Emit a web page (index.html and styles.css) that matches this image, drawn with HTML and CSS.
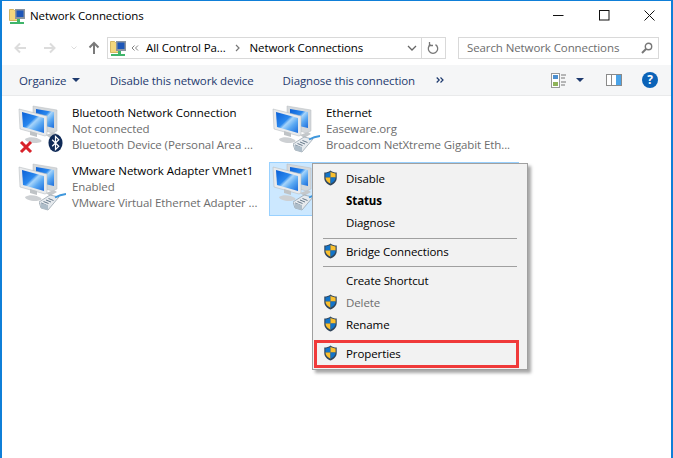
FILE: index.html
```html
<!DOCTYPE html>
<html lang="en">
<head>
<meta charset="utf-8">
<title>Network Connections</title>
<link rel="stylesheet" href="styles.css">
</head>
<body>
<svg class="defs" width="0" height="0" aria-hidden="true">
  <defs>
    <linearGradient id="scr" x1="0" y1="0" x2="1" y2="1">
      <stop offset="0" stop-color="#0a5fd6"/><stop offset=".42" stop-color="#2a88ee"/><stop offset=".52" stop-color="#a6d4fa"/><stop offset=".7" stop-color="#5aa8f2"/><stop offset="1" stop-color="#1a6cdc"/>
    </linearGradient>
    <symbol id="net" viewBox="0 0 48 48">
      <path d="M15 1l24 4v21l-5 2-19-6z" fill="#d4d8db" stroke="#b6bbbf" stroke-width=".5"/>
      <path d="M18 4l18 3v16l-18-4z" fill="url(#scr)"/>
      <path d="M1 4l28 7v19l-2 1L2 24z" fill="#e8eaec" stroke="#aeb4b8" stroke-width=".5"/>
      <path d="M4 7l22 6v15L5 22z" fill="url(#scr)"/>
      <path d="M12 26l7 2v4l-7-2z" fill="#bfc3c6"/>
      <path d="M7 34c4-3 12-2 16 1 2 2-2 3-6 3-5 0-10-2-10-4z" fill="#cdd0d3"/>
      <path d="M28 30l8-3 3 2-7 4z" fill="#c4c8cb"/>
    </symbol>
    <symbol id="plug" viewBox="0 0 27 18">
      <path d="M0 9L11 2l9 2L9 17l-7-2z" fill="#e6eaee" stroke="#8f9ca6" stroke-width=".7"/>
      <path d="M2 10l5 2M4.500 8.500l5 2M7 7l5 2M9.500 5.500l5 2" fill="none" stroke="#66798a" stroke-width="1"/>
      <path d="M2 15l7 2V12L1.500 10z" fill="#aebdc9"/>
      <path d="M16 4.500c3-1.700 6-3 11-3.500" fill="none" stroke="#3f97dc" stroke-width="2"/>
    </symbol>
    <symbol id="shield" viewBox="0 0 16 18">
      <path d="M8 .5c2 1.600 4.300 2.200 7 2.300v6.200c0 4-3 7-7 8.500-4-1.500-7-4.500-7-8.500V2.800C3.700 2.700 6 2.100 8 .5z" fill="#31465c"/>
      <path d="M8 2v6.500H2.300V3.800C4.400 3.600 6.300 3.100 8 2z" fill="#1274c9"/>
      <path d="M8 8.500h5.700V3.800C11.600 3.600 9.700 3.100 8 2z" fill="#fbc02d"/>
      <path d="M8 8.500H2.300c.1 3.200 2.500 5.500 5.700 6.900z" fill="#fbc02d"/>
      <path d="M8 8.500h5.700c-.1 3.200-2.500 5.500-5.700 6.900z" fill="#1274c9"/>
    </symbol>
    <symbol id="folder-net" viewBox="0 0 16 16">
      <path d="M.5 1.500h4l1 1h4v10h-9z" fill="#f3d67c" stroke="#c9a84b" stroke-width=".8"/>
      <rect x="6" y="1" width="10" height="10" fill="#8a94a0"/>
      <rect x="7.500" y="2.500" width="7" height="6.500" fill="#1d56b8"/>
      <rect x="8" y="11" width="3" height="3" fill="#3fb56a"/>
      <rect x="1" y="14" width="14" height="2" fill="#3fb56a"/>
    </symbol>
  </defs>
</svg>

<div class="window">
  <header class="titlebar">
    <svg class="ico16"><use href="#folder-net"/></svg>
    <span class="title-text">Network Connections</span>
    <div class="caption">
      <svg class="cap" viewBox="0 0 11 11"><path d="M0 5.500h10.500" stroke="#111" fill="none"/></svg>
      <svg class="cap" viewBox="0 0 11 11"><rect x=".5" y=".5" width="9.500" height="9.500" stroke="#111" fill="none"/></svg>
      <svg class="cap" viewBox="0 0 11 11"><path d="M.5.500l10 10M10.500.500l-10 10" stroke="#111" fill="none"/></svg>
    </div>
  </header>

  <nav class="navbar">
    <div class="navbtns">
      <svg class="arrow" viewBox="0 0 12 12"><path d="M12 6H1.500M6 1.500L1.500 6 6 10.500" fill="none" stroke="#dcdcdc" stroke-width="2"/></svg>
      <svg class="arrow fwd" viewBox="0 0 12 12"><path d="M0 6h10.500M6 1.500L10.500 6 6 10.500" fill="none" stroke="#dcdcdc" stroke-width="2"/></svg>
      <svg class="mini" viewBox="0 0 6 4"><path d="M.5.500L3 3 5.500.500" fill="none" stroke="#dcdcdc"/></svg>
      <svg class="up" viewBox="0 0 12 13"><path d="M6 13V2M1.500 6.500L6 2l4.500 4.500" fill="none" stroke="#7a7a7a" stroke-width="2"/></svg>
    </div>
    <div class="address">
      <svg class="ico16"><use href="#folder-net"/></svg>
      <svg class="crumb-arrows" viewBox="0 0 8 6"><path d="M3.500.500L1 3l2.500 2.500M7 .5L4.500 3 7 5.500" fill="none" stroke="#808080"/></svg>
      <span class="crumb">All Control Pa...</span>
      <svg class="sep-chev" viewBox="0 0 5 8"><path d="M1 1l3 3-3 3" fill="none" stroke="#777" stroke-width="1.200"/></svg>
      <span class="crumb grow">Network Connections</span>
      <svg class="drop" viewBox="0 0 10 6"><path d="M1 1l4 4 4-4" fill="none" stroke="#666" stroke-width="1.300"/></svg>
      <span class="addr-div"></span>
      <svg class="refresh" viewBox="0 0 12 14"><path d="M3.500 3.600a4.700 4.700 0 1 0 5 0" fill="none" stroke="#777" stroke-width="1.300"/><path d="M2.500 1v3.500H6" fill="none" stroke="#777" stroke-width="1.300"/></svg>
    </div>
    <div class="search">
      <span class="search-text">Search Network Connections</span>
      <svg class="lens" viewBox="0 0 12 12"><circle cx="7.500" cy="4.500" r="3.200" fill="none" stroke="#777" stroke-width="1.400"/><path d="M5 7l-4 4" stroke="#777" stroke-width="2"/></svg>
    </div>
  </nav>

  <div class="toolbar">
    <span class="tool tool-org">Organize</span>
    <span class="caret"></span>
    <span class="tool tool-dis">Disable this network device</span>
    <span class="tool tool-diag">Diagnose this connection</span>
    <svg class="more" viewBox="0 0 8 6"><path d="M.7.500L3.200 3 .7 5.500M4.500.5L7 3 4.500 5.500" fill="none" stroke="#1e3a6e" stroke-width="1.200"/></svg>
    <div class="tool-right">
      <svg class="views" viewBox="0 0 15 15"><rect x=".5" y=".5" width="8" height="14" fill="#fff" stroke="#999"/><rect x="2" y="2" width="5" height="4" fill="#4c8fd0"/><rect x="2" y="9" width="5" height="4" fill="#8fb35a"/><path d="M10 2h5M10 5h4M10 9h5M10 12h4" stroke="#777"/></svg>
      <span class="caret caret-view"></span>
      <svg class="pane" viewBox="0 0 16 12"><rect x=".5" y=".5" width="15" height="11" fill="#fff" stroke="#8a8a8a"/><rect x="10" y="1" width="5" height="10" fill="#4aa3e8"/><path d="M5.500 1v10" stroke="#8a8a8a"/></svg>
      <span class="help">?</span>
    </div>
  </div>

  <main class="content">
    <div class="item">
      <div class="icon-wrap">
        <svg class="net"><use href="#net"/></svg>
        <svg class="badge-x" viewBox="0 0 14 14"><path d="M2 2l10 10M12 2L2 12" stroke="#d8222a" stroke-width="3"/></svg>
        <svg class="badge-bt" viewBox="0 0 16 20"><ellipse cx="8" cy="10" rx="7.500" ry="9.500" fill="#0f2a57"/><path d="M4.500 6.500l7 7L8 17V3l3.500 3.500-7 7" fill="none" stroke="#fff" stroke-width="1.300"/></svg>
      </div>
      <div class="lines"><div class="name">Bluetooth Network Connection</div><div class="sub">Not connected</div><div class="sub">Bluetooth Device (Personal Area ...</div></div>
    </div>
    <div class="item">
      <div class="icon-wrap">
        <svg class="net"><use href="#net"/></svg>
        <svg class="badge-plug"><use href="#plug"/></svg>
      </div>
      <div class="lines"><div class="name">Ethernet</div><div class="sub">Easeware.org</div><div class="sub">Broadcom NetXtreme Gigabit Eth...</div></div>
    </div>
    <div class="item">
      <div class="icon-wrap">
        <svg class="net"><use href="#net"/></svg>
        <svg class="badge-plug"><use href="#plug"/></svg>
      </div>
      <div class="lines"><div class="name">VMware Network Adapter VMnet1</div><div class="sub">Enabled</div><div class="sub">VMware Virtual Ethernet Adapter ...</div></div>
    </div>
    <div class="item selected">
      <div class="icon-wrap">
        <svg class="net"><use href="#net"/></svg>
        <svg class="badge-plug"><use href="#plug"/></svg>
      </div>
    </div>
  </main>

  <div class="menu">
    <div class="mi"><svg class="shield"><use href="#shield"/></svg>Disable</div>
    <div class="mi bold">Status</div>
    <div class="mi">Diagnose</div>
    <div class="msep sep-a"></div>
    <div class="mi"><svg class="shield"><use href="#shield"/></svg>Bridge Connections</div>
    <div class="msep sep-b"></div>
    <div class="mi">Create Shortcut</div>
    <div class="mi dim"><svg class="shield"><use href="#shield"/></svg>Delete</div>
    <div class="mi"><svg class="shield"><use href="#shield"/></svg>Rename</div>
    <div class="mi mark"><svg class="shield"><use href="#shield"/></svg>Properties</div>
  </div>
</div>
</body>
</html>
```
FILE: styles.css
```css
* { box-sizing: border-box; }
html, body { margin: 0; padding: 0; }
body { background: #fff; font-family: "Open Sans", "Noto Sans", sans-serif; font-size: 11.5px; color: #000; overflow: hidden; }
.defs { position: absolute; }
.window { position: relative; width: 673px; height: 458px; border: 1px solid #0f7fd8; border-width: 1px 2px 0 2px; background: #fff; overflow: hidden; }

.titlebar { display: flex; align-items: center; height: 29px; padding: 0 0 0 7px; }
.ico16 { width: 16px; height: 16px; flex: none; }
.title-text { margin-left: 5px; letter-spacing: -.1px; }
.caption { margin-left: auto; display: flex; gap: 34.5px; padding-right: 16px; align-items: center; }
.cap { width: 11px; height: 11px; display: block; }

.navbar { display: flex; align-items: center; height: 35px; padding-top: 2px; padding-bottom: 2px; }
.navbtns { display: flex; align-items: center; width: 105px; padding-left: 12px; flex: none; }
.arrow { width: 12px; height: 12px; }
.fwd { margin-left: 18px; }
.mini { width: 6px; height: 4px; margin-left: 15px; }
.up { width: 12px; height: 13px; margin-left: 11px; }
.address { display: flex; align-items: center; width: 339px; height: 22px; border: 1px solid #d9d9d9; padding-left: 2px; flex: none; }
.crumb-arrows { width: 8px; height: 6px; margin: 0 7px 0 5px; flex: none; }
.crumb { letter-spacing: -.1px; }
.sep-chev { width: 5px; height: 8px; margin: 0 10px 0 9px; flex: none; }
.grow { flex: 1; }
.drop { width: 10px; height: 6px; margin-right: 4px; }
.addr-div { width: 1px; height: 20px; background: #d9d9d9; }
.refresh { width: 12px; height: 14px; margin: 0 6px 0 5px; }
.search { display: flex; align-items: center; justify-content: space-between; width: 201px; height: 22px; margin-left: 12px; border: 1px solid #d9d9d9; padding: 0 5px 0 8px; flex: none; }
.search-text { color: #6d6d6d; letter-spacing: -.1px; }
.lens { width: 12px; height: 12px; }

.toolbar { display: flex; align-items: center; height: 31px; background: #f5f6f7; border-bottom: 1px solid #e9eaeb; color: #1e3a6e; padding-left: 17px; }
.tool { letter-spacing: -.1px; white-space: nowrap; }
.tool-org { width: 53px; }
.caret { width: 0; height: 0; border: 4px solid transparent; border-top: 4px solid #1e3a6e; border-bottom: 0; }
.tool-dis { margin-left: 30px; }
.tool-diag { margin-left: 29px; }
.more { width: 8px; height: 6px; margin-left: 21px; }
.tool-right { margin-left: auto; display: flex; align-items: center; padding-right: 13px; }
.views { width: 15px; height: 15px; }
.caret-view { margin-left: 10px; }
.pane { width: 16px; height: 12px; margin-left: 22px; }
.help { width: 16px; height: 16px; margin-left: 20px; border-radius: 50%; background: #0b63b8; color: #fff; font-weight: 700; font-size: 12px; line-height: 16px; text-align: center; }

.content { display: grid; grid-template-columns: 254px 254px; grid-auto-rows: 54px; row-gap: 4px; padding: 8px 0 0 13px; }
.item { display: flex; padding: 0 0 0 2px; border: 1px solid transparent; }
.selected { background: #cce8ff; border-color: #99d1ff; width: 250px; }
.icon-wrap { position: relative; width: 52px; height: 50px; flex: none; }
.net { position: absolute; left: 0; top: 0; width: 48px; height: 48px; }
.badge-x { position: absolute; left: 1px; top: 35px; width: 14px; height: 14px; }
.badge-bt { position: absolute; left: 30px; top: 28px; width: 15px; height: 20px; }
.badge-plug { position: absolute; left: 21px; top: 30px; width: 27px; height: 18px; }
.lines { padding: 0 0 0 2px; white-space: nowrap; }
.name { height: 16px; line-height: 16px; letter-spacing: -.05px; }
.sub { height: 16px; line-height: 16px; color: #6d6d6d; letter-spacing: -.1px; }

.menu { position: absolute; left: 310px; top: 162px; width: 216px; height: 207px; background: #f2f2f2; border: 1px solid #a0a0a0; box-shadow: 3px 3px 3px rgba(0,0,0,.35); padding: 3px 2px 0 2px; }
.mi { position: relative; display: flex; align-items: center; height: 22px; padding-left: 31px; white-space: nowrap; letter-spacing: -.1px; }
.mi .shield { position: absolute; left: 8px; top: 3px; width: 15px; height: 16px; }
.bold { font-weight: 700; }
.dim { color: #6d6d6d; }
.msep { height: 1px; background: #a0a0a0; margin: 0 8px; }
.sep-a { margin-top: 5px; margin-bottom: 1px; }
.sep-b { margin-top: 4px; margin-bottom: 2px; }
.mark { height: 28px; width: 205px; margin-top: 5px; margin-left: -1px; border: 3px solid #f03a3a; padding: 0 0 1px 29px; }
.mark .shield { left: 6px; top: 2px; }
```
